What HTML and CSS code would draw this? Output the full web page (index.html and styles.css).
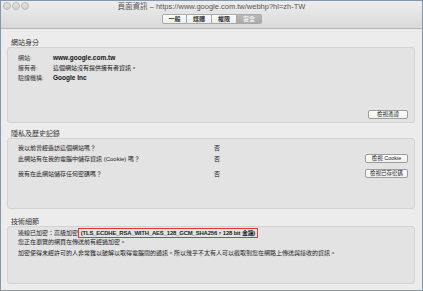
FILE: index.html
```html
<!DOCTYPE html>
<html lang="zh-TW">
<head>
  <meta charset="utf-8">
  <title>頁面資訊</title>
  <link rel="stylesheet" href="styles.css">
</head>
<body>
  <div class="window">
    <header class="titlebar">
      <div class="title-row">
        <div class="lights">
          <span class="light"></span>
          <span class="light"></span>
          <span class="light"></span>
        </div>
        <div class="title">頁面資訊 – https://www.google.com.tw/webhp?hl=zh-TW</div>
        <div></div>
      </div>
      <nav class="tabs">
        <span class="tab">一般</span>
        <span class="tab">媒體</span>
        <span class="tab">權限</span>
        <span class="tab tab-active">安全</span>
      </nav>
    </header>

    <main class="content">
      <section>
        <h2 class="section-title">網站身分</h2>
        <div class="box box-identity">
          <div class="facts">
            <span class="fact-label">網站:</span>
            <span class="fact-value fact-strong">www.google.com.tw</span>
            <span class="fact-label">擁有者:</span>
            <span class="fact-value">這個網站沒有提供擁有者資訊。</span>
            <span class="fact-label">驗證機構:</span>
            <span class="fact-value fact-strong">Google Inc</span>
          </div>
          <div class="box-actions">
            <button class="btn">檢視憑證</button>
          </div>
        </div>
      </section>

      <section>
        <h2 class="section-title title-privacy">隱私及歷史記錄</h2>
        <div class="box box-privacy">
          <div class="privacy-grid">
            <span>我以前曾經造訪這個網站嗎？</span>
            <span>否</span>
            <span></span>

            <span>此網站有在我的電腦中儲存資訊 (Cookie) 嗎？</span>
            <span>否</span>
            <button class="btn">檢視 Cookie</button>

            <span>我有在此網站儲存任何密碼嗎？</span>
            <span>否</span>
            <button class="btn">檢視已存密碼</button>
          </div>
        </div>
      </section>

      <section>
        <h2 class="section-title title-tech">技術細節</h2>
        <div class="box box-tech">
          <p class="tech-line">連線已加密：高級加密 <span class="cipher">(TLS_ECDHE_RSA_WITH_AES_128_GCM_SHA256，128 bit 金鑰)</span></p>
          <p class="tech-line">您正在瀏覽的網頁在傳送前有經過加密。</p>
          <p class="tech-line tech-gap">加密使得未經許可的人非常難以破解以取得電腦間的通訊。所以幾乎不太有人可以截取到您在網路上傳送與接收的資訊。</p>
        </div>
      </section>
    </main>
  </div>
</body>
</html>
```

FILE: styles.css
```css
body {
  margin: 0;
  font-family: "Liberation Sans", "Noto Sans CJK TC", sans-serif;
  color: #222;
  background: #fff;
}

.window {
  width: 423px;
  height: 291px;
  box-sizing: border-box;
  border: 1px solid #8299ad;
  background: #ececec;
  display: flex;
  flex-direction: column;
}

/* title bar */

.titlebar {
  height: 27px;
  border-bottom: 1px solid #b4b4b4;
  background: linear-gradient(#ededed, #d9d9d9);
}

.title-row {
  display: grid;
  grid-template-columns: 1fr auto 1fr;
  height: 12px;
  align-items: center;
}

.lights {
  display: flex;
  gap: 1px;
  padding-left: 2px;
  align-self: start;
  padding-top: 1px;
}

.light {
  width: 6px;
  height: 6px;
  border-radius: 50%;
  border: 1px solid #b9b9b9;
  background: linear-gradient(#e2e2e2, #d2d2d2);
}

.title {
  font-size: 7.5px;
  color: #555;
  line-height: 12px;
}

.tabs {
  display: flex;
  justify-content: center;
  margin-top: 1px;
  padding-left: 1px;
}

.tab {
  width: 25px;
  height: 10px;
  box-sizing: border-box;
  border: 1px solid #a9a9a9;
  border-left: none;
  background: linear-gradient(#fdfdfd, #ececec);
  font-size: 6px;
  font-weight: bold;
  line-height: 8px;
  text-align: center;
  color: #333;
}

.tab:first-child {
  border-left: 1px solid #a9a9a9;
  border-radius: 2px 0 0 2px;
}

.tab:last-child {
  border-radius: 0 2px 2px 0;
}

.tab-active {
  background: linear-gradient(#b9b9b9, #a9a9a9);
  color: #eee;
}

/* content */

.content {
  flex: 1;
  padding: 9px 7px 0 6px;
}

.section-title {
  margin: 0;
  padding-left: 4px;
  font-size: 7px;
  font-weight: normal;
  line-height: 9px;
  color: #333;
}

.title-privacy {
  margin-top: 6px;
}

.title-tech {
  margin-top: 8px;
}

.box {
  box-sizing: border-box;
  border: 1px solid #d2d2d2;
  border-radius: 3px;
  background: #e3e3e3;
  padding-left: 10px;
  padding-right: 6px;
}

.box-identity {
  height: 76px;
  display: flex;
  flex-direction: column;
  padding-top: 4px;
  padding-bottom: 3px;
}

.facts {
  display: grid;
  grid-template-columns: 35px 1fr;
  grid-auto-rows: 10px;
  align-items: center;
  font-size: 6px;
}

.fact-label {
  color: #333;
}

.fact-value {
  color: #111;
}

.fact-strong {
  font-weight: bold;
  font-size: 6.5px;
}

.box-actions {
  margin-top: auto;
  display: flex;
  justify-content: flex-end;
}

.btn {
  height: 9px;
  min-width: 40px;
  box-sizing: border-box;
  padding: 0 4px;
  border: 1px solid #9c9c9c;
  border-radius: 2px;
  background: linear-gradient(#ffffff, #f0f0f0);
  font-family: inherit;
  font-size: 5.5px;
  line-height: 7px;
  color: #222;
}

.box-privacy {
  height: 71px;
  padding-top: 3px;
}

.privacy-grid {
  display: grid;
  grid-template-columns: 196px 1fr auto;
  grid-template-rows: 10px 12px 18px;
  align-items: center;
  font-size: 6px;
}

.box-tech {
  height: 58px;
  padding-top: 2px;
  font-size: 6px;
}

.tech-line {
  margin: 0;
  line-height: 9px;
}

.tech-gap {
  margin-top: 2px;
}

.cipher {
  font-weight: bold;
  font-size: 5.9px;
  letter-spacing: -0.15px;
  outline: 1.5px solid #e4372b;
  outline-offset: 1px;
  padding: 0 1px;
}
```
